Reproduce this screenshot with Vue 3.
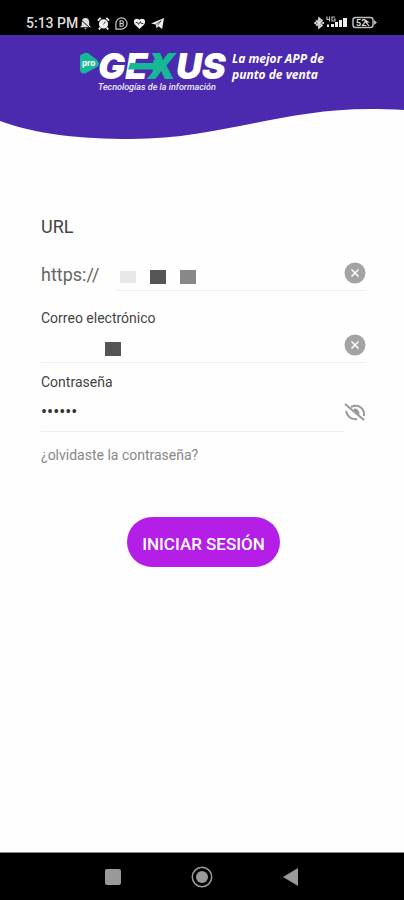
<script setup>
import { ref } from 'vue'

const host = ref('')
const email = ref('')
const password = ref('secret')
const showPassword = ref(false)
</script>

<template>
  <div class="screen">
    <div class="status">
      <div class="status-group">
        <span class="time">5:13 PM</span>
        <svg class="glyph" viewBox="0 0 14 14" aria-hidden="true">
          <path d="M7 1c3 0 4 2 4 5v3l2 2H1l2-2V6c0-3 1-5 4-5zM5.500 12h3l-1.500 1.500z" fill="#ddd" />
          <path d="M1 2l12 11" stroke="#000" stroke-width="1" />
        </svg>
        <svg class="glyph" viewBox="0 0 14 14" aria-hidden="true">
          <circle cx="7" cy="7.500" r="5" fill="#eee" />
          <path d="M1 4l3-3M13 4l-3-3M3.500 11.500L2 13.500M10.500 11.500l1.500 2" stroke="#eee" stroke-width="2" />
          <path d="M7 8l2-3" stroke="#333" stroke-width="1" />
        </svg>
        <svg class="glyph" viewBox="0 0 14 14" aria-hidden="true">
          <path d="M1 13V7a6 6 0 1 1 6 6z" fill="none" stroke="#ccc" stroke-width="1.300" />
          <path d="M5.500 4v6h2a1.500 1.500 0 0 0 0-3h-2h2a1.500 1.500 0 0 0 0-3z" fill="none" stroke="#ccc" stroke-width="1.200" />
        </svg>
        <svg class="glyph" viewBox="0 0 14 14" aria-hidden="true">
          <path d="M7 13L2 8C-1 4 3 0 7 3c4-3 8 1 5 5z" fill="#eee" />
          <path d="M3 6h2l1 2 2-3 1 2h2" fill="none" stroke="#222" stroke-width="1" />
        </svg>
        <svg class="glyph telegram" viewBox="0 0 14 14" aria-hidden="true">
          <path d="M0 7L14 1l-2 12-4-3-2 2-1-4z" fill="#eee" />
          <path d="M5 8l6-4-4 5" fill="none" stroke="#333" stroke-width="0.800" />
        </svg>
      </div>
      <svg class="signals" viewBox="0 0 64 16" aria-hidden="true">
        <path d="M5 3L10 8 5 13 0 8Z" fill="#777" />
        <path d="M2 5.500l6 5-3 2.500V3l3 2.500-6 5" fill="none" stroke="#ddd" stroke-width="1.500" />
        <path d="M0.500 8h1.500M8.500 8h1.500" stroke="#ddd" stroke-width="2" />
        <path d="M13 1.500v3h3M15.500 1.500v5M21 2h-3v4h3V4h-1" fill="none" stroke="#bbb" stroke-width="1.200" />
        <path d="M13 12V9.500h2V12zM17 12V9h3v3zM21 12V7h3v5zM25 12V5h3v7zM29 12V3h4v9z" fill="#eee" />
        <rect x="39" y="2.500" width="20" height="10" rx="2.500" fill="none" stroke="#bbb" stroke-width="1.500" />
        <path d="M60 5l3 2.500-3 2.500z" fill="#bbb" />
        <text x="42" y="11" class="battery">52</text>
        <path d="M51 5l3 2h-2l3 4" fill="none" stroke="#ddd" stroke-width="1.200" />
      </svg>
    </div>

    <header class="header">
      <svg class="wave" viewBox="0 0 404 104" preserveAspectRatio="none" aria-hidden="true">
        <path d="M0 0H404V75C392 74 380 74 370 74C280 74 220 104 131 104C80 104 35 99 0 86Z" fill="#4b2ab0" />
      </svg>
      <div class="brand">
        <svg class="logo" viewBox="0 0 148 44" role="img" aria-label="pro GEXUS Tecnologías de la información">
          <path d="M3 5Q0 5 0 8V20Q0 26 6 24L17 18Q21 15 17 11L8 4Q5 3 3 5Z" fill="#16b896" />
          <text x="2" y="17" class="pro">pro</text>
          <text x="18" y="30" class="wordmark">GE<tspan class="accent">X</tspan>US</text>
          <path d="M50 14H73L74 10 83 17 72 25 73 20.500H48Z" fill="#16b896" />
          <text x="18" y="41" class="caption">Tecnologías de la información</text>
        </svg>
        <p class="slogan">La mejor APP de<br />punto de venta</p>
      </div>
    </header>

    <main class="main">
      <form class="form" @submit.prevent>
        <label class="label url-label" for="host">URL</label>
        <div class="row">
          <span class="prefix">https://</span>
          <div class="field url">
            <span class="mask pale"></span>
            <span class="mask dark"></span>
            <span class="mask mid"></span>
            <input id="host" v-model="host" type="text" />
            <button class="icon" type="button" aria-label="Borrar URL" @click="host = ''">
              <svg viewBox="0 0 22 22"><circle cx="11" cy="11" r="10.500" fill="#a3a3a3" /><path d="M7.500 7.500l7 7M14.500 7.500l-7 7" stroke="#fff" stroke-width="1.500" /></svg>
            </button>
          </div>
        </div>

        <label class="label" for="email">Correo electrónico</label>
        <div class="field email">
          <span class="mask dark"></span>
          <input id="email" v-model="email" type="text" />
          <button class="icon" type="button" aria-label="Borrar correo" @click="email = ''">
            <svg viewBox="0 0 22 22"><circle cx="11" cy="11" r="10.500" fill="#a3a3a3" /><path d="M7.500 7.500l7 7M14.500 7.500l-7 7" stroke="#fff" stroke-width="1.500" /></svg>
          </button>
        </div>

        <label class="label password-label" for="password">Contraseña</label>
        <div class="row">
          <div class="field password">
            <input id="password" v-model="password" :type="showPassword ? 'text' : 'password'" />
          </div>
          <button class="icon" type="button" aria-label="Mostrar contraseña" @click="showPassword = !showPassword">
            <svg viewBox="0 0 22 22" fill="none" stroke="#999" stroke-width="2">
              <path d="M1 3l19 16" />
              <path d="M7 6C13 3 19 6 20 12V15M2 10C3 15 7 19 13 18" />
              <path d="M10 9a3.500 3.500 0 0 1 4 4" stroke-width="3" />
            </svg>
          </button>
        </div>

        <a class="forgot" href="#">¿olvidaste la contraseña?</a>
        <button class="submit" type="submit">INICIAR SESIÓN</button>
      </form>
    </main>

    <nav class="navbar" aria-label="Sistema">
      <button type="button" aria-label="Recientes">
        <svg viewBox="0 0 22 22"><rect x="3" y="3" width="16" height="16" rx="2" fill="#999" /></svg>
      </button>
      <button type="button" aria-label="Inicio">
        <svg viewBox="0 0 22 22"><circle cx="11" cy="11" r="9.700" fill="none" stroke="#999" stroke-width="1.500" /><circle cx="11" cy="11" r="6" fill="#999" /></svg>
      </button>
      <button type="button" aria-label="Atrás">
        <svg viewBox="0 0 22 22"><path d="M3 11L18 2V20Z" fill="#999" /></svg>
      </button>
    </nav>
  </div>
</template>

<style>
body {
  margin: 0;
}
</style>

<style scoped>
.screen {
  display: flex;
  flex-direction: column;
  min-height: 100vh;
  background: #fefefe;
  font-family: Roboto, "Liberation Sans", sans-serif;
  color: #444;
}
button {
  padding: 0;
  border: 0;
  background: none;
  font-family: inherit;
  cursor: pointer;
}
svg {
  display: block;
}
.status {
  display: flex;
  justify-content: space-between;
  box-sizing: border-box;
  height: 35px;
  padding: 12px 26px 0;
  background: #000;
  color: #ddd;
}
.status-group {
  display: flex;
  gap: 5px;
  height: 22px;
  align-items: center;
}
.time {
  font-size: 14px;
  font-weight: 500;
  margin-right: -4px;
}
.glyph {
  width: 13px;
  height: 13px;
}
.signals {
  width: 64px;
  height: 16px;
  margin-top: 3px;
}
.battery {
  font-size: 9px;
  font-weight: 700;
  fill: #ddd;
}
.header {
  display: grid;
}
.wave,
.brand {
  grid-area: 1 / 1;
}
.wave {
  width: 100%;
  height: 104px;
}
.brand {
  display: flex;
  align-items: flex-start;
  justify-content: center;
  gap: 4px;
  padding-top: 14px;
}
.logo {
  width: 148px;
  height: 44px;
  overflow: visible;
}
.pro {
  font: 700 9px Roboto, sans-serif;
  fill: #fff;
}
.wordmark {
  font: italic 900 36px Inter, "Liberation Sans", sans-serif;
  fill: #fff;
}
.accent {
  fill: #16b896;
}
.caption {
  font: italic 500 9px Roboto, sans-serif;
  fill: #f0ecff;
}
.slogan {
  margin: 2px 0 0;
  color: #fff;
  font: italic 700 12px/16px "Noto Sans", sans-serif;
}
.main {
  flex: 1;
  padding: 76px 38px 24px 41px;
}
.form {
  display: flex;
  flex-direction: column;
}
.label {
  font-size: 14px;
  line-height: 18px;
}
.url-label {
  font-size: 18px;
  line-height: 24px;
}
.row {
  display: flex;
  align-items: center;
}
.url-label + .row {
  margin: 16px 0 18px;
}
.prefix {
  width: 75px;
  padding-top: 4px;
  font-size: 18px;
  line-height: 24px;
  color: #666;
}
.field {
  display: flex;
  align-items: center;
  gap: 14px;
  min-width: 0;
  height: 35px;
  padding-left: 4px;
  border-bottom: 1px solid #eee;
}
.row .field {
  flex: 1;
}
input {
  flex: 1;
  min-width: 0;
  height: 24px;
  padding: 0;
  border: 0;
  outline: 0;
  background: none;
  color: #333;
  font: 18px Roboto, sans-serif;
}
.mask {
  width: 16px;
  height: 14px;
  margin-top: 8px;
}
.pale {
  height: 12px;
  background: #e8e8e8;
}
.dark {
  background: #555;
}
.mid {
  background: #888;
}
.icon {
  flex: none;
  width: 22px;
  height: 22px;
}
.icon svg {
  width: 22px;
  height: 22px;
}
.email {
  padding-left: 64px;
}
.password-label {
  margin-top: 10px;
}
.password {
  padding-left: 0;
  height: 40px;
}
.forgot {
  align-self: flex-start;
  margin-top: 14px;
  font-size: 14px;
  line-height: 18px;
  color: #888;
  text-decoration: none;
}
.submit {
  align-self: center;
  height: 50px;
  margin-top: 53px;
  padding: 4px 15px 0;
  border-radius: 25px;
  background: #b41ee6;
  color: #fff;
  font-size: 17px;
  font-weight: 500;
}
.navbar {
  display: flex;
  align-items: center;
  justify-content: center;
  gap: 67px;
  height: 47px;
  border-top: 1px solid #888;
  background: #000;
}
.navbar button,
.navbar svg {
  width: 22px;
  height: 22px;
}
</style>
